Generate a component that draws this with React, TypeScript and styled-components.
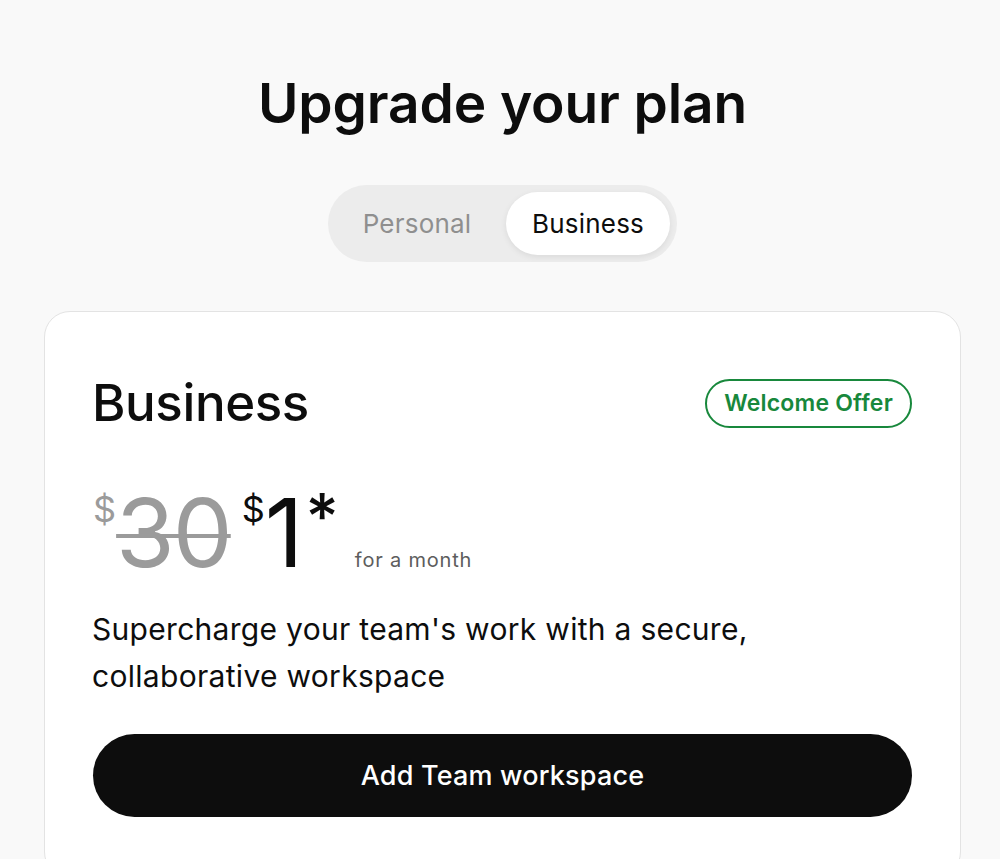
import React from "react";
import styled, { createGlobalStyle } from "styled-components";

const GlobalStyle = createGlobalStyle`
  html, body {
    margin: 0;
    padding: 0;
    background: #f9f9f9;
  }
  body {
    font-family: Inter, "Noto Sans", "Liberation Sans", sans-serif;
    color: #0d0d0d;
    -webkit-font-smoothing: antialiased;
  }
`;

const Page = styled.div`
  display: flex;
  flex-direction: column;
  align-items: center;
  padding: 70px 39px 0 44px;
  min-height: 859px;
  box-sizing: border-box;
  overflow: hidden;
`;

const Title = styled.h1`
  margin: 0;
  font-size: 55px;
  line-height: 66px;
  font-weight: 600;
  letter-spacing: -0.1px;
`;

const Toggle = styled.div`
  display: flex;
  gap: 7px;
  margin-top: 49px;
  padding: 7px;
  background: #ececec;
  border-radius: 999px;
`;

const ToggleOption = styled.button<{ $active?: boolean }>`
  width: 164px;
  height: 63px;
  border: none;
  border-radius: 999px;
  font-family: inherit;
  font-size: 26px;
  font-weight: 400;
  letter-spacing: 0.2px;
  cursor: pointer;
  background: ${(p) => (p.$active ? "#ffffff" : "transparent")};
  color: ${(p) => (p.$active ? "#0d0d0d" : "#8f8f8f")};
  box-shadow: ${(p) => (p.$active ? "0 2px 6px rgba(0, 0, 0, 0.08)" : "none")};
`;

const Card = styled.div`
  align-self: stretch;
  margin-top: 49px;
  padding: 60px 48px 60px 48px;
  background: #ffffff;
  border: 1px solid #e3e3e3;
  border-radius: 26px;
`;

const CardHeader = styled.div`
  display: flex;
  align-items: center;
  justify-content: space-between;
`;

const PlanName = styled.h2`
  margin: 0 0 0 -1px;
  font-size: 51px;
  line-height: 62px;
  font-weight: 500;
  letter-spacing: -0.4px;
`;

const Badge = styled.span`
  display: inline-flex;
  align-items: center;
  height: 49px;
  padding: 0 17px;
  box-sizing: border-box;
  border: 2px solid #18883c;
  border-radius: 999px;
  color: #18883c;
  font-size: 23px;
  font-weight: 600;
  letter-spacing: 0.2px;
`;

const PriceRow = styled.div`
  display: flex;
  align-items: flex-start;
  margin-top: 51px;
  height: 95px;
`;

const Price = styled.div<{ $old?: boolean }>`
  display: flex;
  align-items: flex-start;
  color: ${(p) => (p.$old ? "#9b9b9b" : "#0d0d0d")};
  margin-right: ${(p) => (p.$old ? "11px" : "0")};
`;

const Currency = styled.span`
  font-size: 36px;
  line-height: 36px;
  margin-top: 6px;
  font-weight: 400;
`;

const Amount = styled.span<{ $old?: boolean }>`
  font-size: 95px;
  line-height: 95px;
  font-weight: 400;
  letter-spacing: -2px;
  text-decoration: ${(p) => (p.$old ? "line-through" : "none")};
  text-decoration-thickness: 4px;
  text-decoration-color: #9b9b9b;
`;

const Star = styled.span`
  font-size: 64px;
  line-height: 64px;
  font-weight: 500;
  margin-left: 4px;
`;

const Period = styled.span`
  align-self: flex-end;
  margin-left: 16px;
  margin-bottom: 8px;
  font-size: 20px;
  line-height: 24px;
  color: #5d5d5d;
  letter-spacing: 0.8px;
`;

const Description = styled.p`
  margin: 26px 0 0 -1px;
  font-size: 30px;
  line-height: 47px;
  font-weight: 400;
  letter-spacing: 0.3px;
  max-width: 720px;
`;

const PrimaryButton = styled.button`
  display: block;
  width: 100%;
  height: 83px;
  margin-top: 34px;
  border: none;
  border-radius: 999px;
  background: #0d0d0d;
  color: #ffffff;
  font-family: inherit;
  font-size: 27px;
  font-weight: 500;
  letter-spacing: 0.2px;
  cursor: pointer;
`;

export default function App() {
  return (
    <>
      <GlobalStyle />
      <Page>
        <Title>Upgrade your plan</Title>
        <Toggle>
          <ToggleOption>Personal</ToggleOption>
          <ToggleOption $active>Business</ToggleOption>
        </Toggle>
        <Card>
          <CardHeader>
            <PlanName>Business</PlanName>
            <Badge>Welcome Offer</Badge>
          </CardHeader>
          <PriceRow>
            <Price $old>
              <Currency>$</Currency>
              <Amount $old>30</Amount>
            </Price>
            <Price>
              <Currency>$</Currency>
              <Amount>1</Amount>
              <Star>*</Star>
            </Price>
            <Period>for a month</Period>
          </PriceRow>
          <Description>
            Supercharge your team's work with a secure, collaborative workspace
          </Description>
          <PrimaryButton>Add Team workspace</PrimaryButton>
        </Card>
      </Page>
    </>
  );
}
